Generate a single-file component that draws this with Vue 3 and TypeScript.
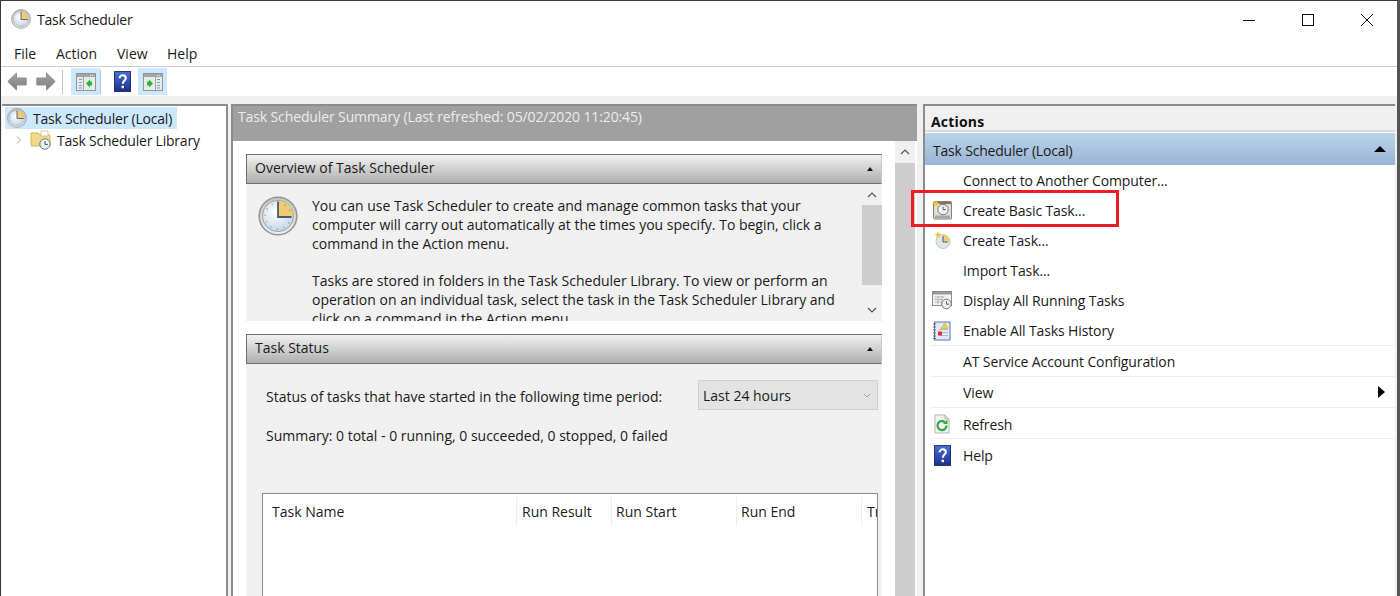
<script setup lang="ts">
interface ActionItem { label: string; icon?: string; sep?: boolean; arrow?: boolean; h: number }
const actions: ActionItem[] = [
  { label: 'Connect to Another Computer...', h: 30 },
  { label: 'Create Basic Task...', icon: 'basic', h: 30 },
  { label: 'Create Task...', icon: 'task', h: 30 },
  { label: 'Import Task...', h: 30 },
  { label: 'Display All Running Tasks', icon: 'running', h: 30 },
  { label: 'Enable All Tasks History', icon: 'history', sep: true, h: 31 },
  { label: 'AT Service Account Configuration', sep: true, h: 31 },
  { label: 'View', arrow: true, sep: true, h: 31 },
  { label: 'Refresh', icon: 'refresh', sep: true, h: 31 },
  { label: 'Help', icon: 'help', h: 33 },
]
const menus = ['File', 'Action', 'View', 'Help']
const columns = [
  { name: 'Task Name', width: 254 },
  { name: 'Run Result', width: 95 },
  { name: 'Run Start', width: 125 },
  { name: 'Run End', width: 125 },
  { name: 'Tr', width: 16 },
]
</script>

<template>
  <div class="window">
    <svg class="defs" width="0" height="0">
      <defs>
        <radialGradient id="face" cx="42%" cy="38%" r="70%">
          <stop offset="0" stop-color="#ffffff" />
          <stop offset="1" stop-color="#bfd2e2" />
        </radialGradient>
        <linearGradient id="rim" x1="0" y1="0" x2="0" y2="1">
          <stop offset="0" stop-color="#c4c4c4" />
          <stop offset="1" stop-color="#f0f0f0" />
        </linearGradient>
        <linearGradient id="helpbg" x1="0" y1="0" x2="0" y2="1">
          <stop offset="0" stop-color="#4a72d8" />
          <stop offset="1" stop-color="#1c2f86" />
        </linearGradient>
        <linearGradient id="arrowbg" x1="0" y1="0" x2="0" y2="1">
          <stop offset="0" stop-color="#a8a8a8" />
          <stop offset="1" stop-color="#7a7a7a" />
        </linearGradient>
        <symbol id="clock" viewBox="0 0 40 40">
          <circle cx="20" cy="20" r="18.8" fill="url(#rim)" stroke="#969696" stroke-width="1.6" />
          <circle cx="20" cy="20" r="15.6" fill="url(#face)" stroke="#9ea4a8" stroke-width="1" />
          <path d="M20 20V4.8A15.2 15.2 0 0 1 35.2 20Z" fill="#eecb74" />
          <circle cx="20" cy="20" r="13" fill="none" stroke="#8d9aa6" stroke-width="1.6" stroke-dasharray="1 5.8" />
          <path d="M20 5.5V21H33.5" fill="none" stroke="#4c5a68" stroke-width="1.8" />
        </symbol>
        <symbol id="help" viewBox="0 0 18 22">
          <rect x=".5" y=".5" width="17" height="21" fill="url(#helpbg)" stroke="#1b2a70" />
          <path d="M6 7.5c0-4.2 6.5-4 6.5 0 0 2.6-3.2 2.6-3.2 6" fill="none" stroke="#fff" stroke-width="2.2" />
          <rect x="8" y="15.5" width="2.6" height="2.6" fill="#fff" />
        </symbol>
        <symbol id="winleft" viewBox="0 0 20 18">
          <rect x=".5" y=".5" width="19" height="17" fill="#e4ebe8" stroke="#949494" />
          <rect x="1" y="1" width="18" height="3" fill="#a4a4a4" />
          <path d="M14 2h1v1h-1zM16 2h1v1h-1z" fill="#eeeeee" />
          <path d="M3 6.5h3M3 9.5h3M3 12.5h3M3 15h3" stroke="#8497c8" stroke-width="1.2" />
          <path d="M7.5 4v13" stroke="#a4a4a4" />
          <path d="M10 10.5l4-4v8z" fill="#2bb33c" />
          <path d="M14 8.5h2v4h-2z" fill="#2bb33c" />
        </symbol>
        <symbol id="winright" viewBox="0 0 20 18">
          <rect x=".5" y=".5" width="19" height="17" fill="#e4ebe8" stroke="#949494" />
          <rect x="1" y="1" width="18" height="3" fill="#a4a4a4" />
          <path d="M14 2h1v1h-1zM16 2h1v1h-1z" fill="#eeeeee" />
          <path d="M14 6.5h3M14 9.5h3M14 12.5h3M14 15h3" stroke="#8497c8" stroke-width="1.2" />
          <path d="M12.5 4v13" stroke="#a4a4a4" />
          <path d="M6 6.5l4 4-4 4z" fill="#2bb33c" />
          <path d="M4 8.5h2v4H4z" fill="#2bb33c" />
        </symbol>
      </defs>
    </svg>

    <header class="titlebar">
      <svg class="title-icon" viewBox="0 0 40 40"><use href="#clock" /></svg>
      <span class="title-text">Task Scheduler</span>
      <div class="caption">
        <svg class="cap" viewBox="0 0 12 12"><path d="M0 6.5h12" stroke="#111" fill="none" /></svg>
        <svg class="cap" viewBox="0 0 12 12"><rect x=".5" y=".5" width="11" height="11" fill="none" stroke="#111" /></svg>
        <svg class="cap" viewBox="0 0 12 12"><path d="M0 0l12 12M12 0L0 12" stroke="#111" fill="none" /></svg>
      </div>
    </header>

    <nav class="menubar">
      <span v-for="m in menus" :key="m" class="menu">{{ m }}</span>
    </nav>

    <div class="toolbar">
      <svg class="nav-arrow" viewBox="0 0 20 19"><path d="M.8 9.5L9.5 1v5h9.7v7H9.5v5z" fill="url(#arrowbg)" stroke="#909090" /></svg>
      <svg class="nav-arrow second" viewBox="0 0 20 19"><path d="M19.2 9.5L10.5 1v5H.8v7h9.7v5z" fill="url(#arrowbg)" stroke="#909090" /></svg>
      <i class="tb-sep first-sep"></i>
      <span class="tb-btn"><svg class="tb-win" viewBox="0 0 20 18"><use href="#winleft" /></svg></span>
      <i class="tb-sep"></i>
      <svg class="tb-help" viewBox="0 0 18 22"><use href="#help" /></svg>
      <span class="tb-btn last"><svg class="tb-win" viewBox="0 0 20 18"><use href="#winright" /></svg></span>
    </div>

    <main class="panes">
      <aside class="tree">
        <div class="tree-row selected">
          <svg class="tree-clock" viewBox="0 0 40 40"><use href="#clock" /></svg>
          <span>Task Scheduler (Local)</span>
        </div>
        <div class="tree-row child">
          <svg class="chev" viewBox="0 0 6 8"><path d="M1 .5L4.5 4 1 7.5" fill="none" stroke="#a6a6a6" /></svg>
          <svg class="folder" viewBox="0 0 22 20">
            <path d="M1 3h7l2 2h10v11H1z" fill="#f3d987" stroke="#d8b55f" />
            <rect x="11" y="1" width="7" height="5" fill="#fff" stroke="#c8b078" stroke-width=".7" />
            <circle cx="15" cy="14" r="5.2" fill="#e8eef2" stroke="#6f7b80" />
            <path d="M15 11v3.4h3" fill="none" stroke="#40606a" />
          </svg>
          <span>Task Scheduler Library</span>
        </div>
      </aside>

      <section class="center">
        <div class="summary-head">Task Scheduler Summary (Last refreshed: 05/02/2020 11:20:45)</div>
        <div class="center-body">
          <div class="sections">
            <div class="group-head">
              <span>Overview of Task Scheduler</span>
              <i class="mini-up"></i>
            </div>
            <div class="overview">
              <svg class="big-clock" viewBox="0 0 40 40"><use href="#clock" /></svg>
              <div class="overview-text">
                <p>You can use Task Scheduler to create and manage common tasks that your computer will carry out automatically at the times you specify. To begin, click a command in the Action menu.</p>
                <p>Tasks are stored in folders in the Task Scheduler Library. To view or perform an operation on an individual task, select the task in the Task Scheduler Library and click on a command in the Action menu.</p>
              </div>
              <div class="inner-scroll">
                <svg class="sb-chev" viewBox="0 0 10 6"><path d="M1 5l4-4 4 4" fill="none" stroke="#555" stroke-width="1.2" /></svg>
                <div class="inner-track"><div class="inner-thumb"></div></div>
                <svg class="sb-chev" viewBox="0 0 10 6"><path d="M1 1l4 4 4-4" fill="none" stroke="#555" stroke-width="1.2" /></svg>
              </div>
            </div>
            <div class="group-head status-head">
              <span>Task Status</span>
              <i class="mini-up"></i>
            </div>
            <div class="status">
              <div class="period">
                <span class="period-label">Status of tasks that have started in the following time period:</span>
                <div class="combo">
                  <span>Last 24 hours</span>
                  <svg class="combo-chev" viewBox="0 0 8 5"><path d="M1 1l3 3 3-3" fill="none" stroke="#a0a0a0" /></svg>
                </div>
              </div>
              <div class="totals">Summary: 0 total - 0 running, 0 succeeded, 0 stopped, 0 failed</div>
              <div class="table">
                <div class="table-head">
                  <span v-for="c in columns" :key="c.name" class="col" :style="{ width: c.width + 'px' }">{{ c.name }}</span>
                </div>
              </div>
            </div>
          </div>
          <div class="outer-scroll">
            <div class="outer-up">
              <svg class="sb-chev" viewBox="0 0 10 6"><path d="M1 5l4-4 4 4" fill="none" stroke="#555" stroke-width="1.2" /></svg>
            </div>
            <div class="outer-thumb"></div>
          </div>
        </div>
      </section>

      <aside class="actions">
        <div class="actions-title">Actions</div>
        <div class="actions-section">
          <span>Task Scheduler (Local)</span>
          <i class="section-up"></i>
        </div>
        <ul class="action-list">
          <li v-for="a in actions" :key="a.label" class="action" :class="{ sep: a.sep }" :style="{ height: a.h + 'px' }">
            <span class="action-icon">
              <svg v-if="a.icon === 'basic'" class="ai" viewBox="0 0 20 20">
                <rect x="1.5" y="1.5" width="18" height="17.5" rx="1" fill="#e2dcd2" stroke="#8a7f74" />
                <rect x="2" y="2" width="17" height="2" fill="#8a6f60" />
                <rect x="3" y="15.5" width="15" height="2.5" fill="#aaa69e" />
                <circle cx="11" cy="9.5" r="5.2" fill="#f2f6f8" stroke="#6f7c84" />
                <path d="M11 6.5v3.2h3" fill="none" stroke="#4c5a68" />
                <path d="M4 0l1 2.4L7.5 3 5.4 4.5 6 7 4 5.6 2 7l.6-2.5L.5 3 3 2.4z" fill="#f7c531" />
              </svg>
              <svg v-else-if="a.icon === 'task'" class="ai" viewBox="0 0 20 20">
                <circle cx="11" cy="11.5" r="7" fill="#dfe7ee" stroke="#c0c8d0" />
                <path d="M11 11.5V4.5a7 7 0 0 1 7 7z" fill="#eecb74" />
                <path d="M11 6v6h5" fill="none" stroke="#4c5a68" />
                <path d="M6 1l1 2.4L9.5 4 7.4 5.5 8 8 6 6.6 4 8l.6-2.5L2.5 4 5 3.4z" fill="#f7c531" />
              </svg>
              <svg v-else-if="a.icon === 'running'" class="ai" viewBox="0 0 20 20">
                <rect x=".5" y="1.5" width="19" height="14" fill="#f2f2f2" stroke="#8a8a8a" />
                <rect x="1" y="2" width="18" height="2.5" fill="#9a9a9a" />
                <path d="M2.5 7h10M2.5 9.5h8M2.5 12h7M6 6v8M10 6v8" stroke="#b4b4b4" />
                <circle cx="14.5" cy="14" r="4.8" fill="#e8eef2" stroke="#6f7b80" />
                <path d="M14.5 11.2v3h2.6" fill="none" stroke="#40606a" />
              </svg>
              <svg v-else-if="a.icon === 'history'" class="ai" viewBox="0 0 20 20">
                <rect x="2.5" y="1" width="15.5" height="18" fill="#dfe9f8" stroke="#5f74a8" />
                <path d="M1 3h3M1 6h3M1 9h3M1 12h3M1 15h3M1 17.5h3" stroke="#6a6a6a" />
                <path d="M7 8.5h9M7 11.5h9M7 14.5h9" stroke="#a9b8d4" />
                <path d="M12.5 2L16 7.5H9z" fill="#f5d33b" stroke="#c79f1f" stroke-width=".5" />
                <rect x="6" y="10.5" width="4" height="4" fill="#d8343a" />
              </svg>
              <svg v-else-if="a.icon === 'refresh'" class="ai" viewBox="0 0 20 20">
                <path d="M3 1h10l4 4v14H3z" fill="#f4f4f4" stroke="#b4b4b4" />
                <path d="M13 1v4h4" fill="#e0e0e0" stroke="#b4b4b4" />
                <path d="M14.5 11.5a4.5 4.5 0 1 1-1.6-3.4" fill="none" stroke="#2fa83d" stroke-width="2.2" />
                <path d="M15.5 5.5v4.5h-4.5z" fill="#2fa83d" />
              </svg>
              <svg v-else-if="a.icon === 'help'" class="ai help" viewBox="0 0 18 22"><use href="#help" /></svg>
            </span>
            <span>{{ a.label }}</span>
            <i v-if="a.arrow" class="sub-arrow"></i>
          </li>
        </ul>
        <div class="highlight"></div>
      </aside>
    </main>
  </div>
</template>

<style>
html, body { margin: 0; background: #fff; }
</style>

<style scoped>
.window {
  position: relative;
  box-sizing: border-box;
  width: 1400px;
  height: 596px;
  overflow: hidden;
  background: #fff;
  border-top: 1px solid #3a3a3a;
  border-left: 1px solid #3a3a3a;
  border-right: 3px solid #555;
  font-family: "Open Sans", "Noto Sans", sans-serif;
  font-size: 14px;
  color: #1a1a1a;
}
.defs { position: absolute; }
.titlebar { display: flex; align-items: center; height: 38px; box-sizing: border-box; padding: 0 0 2px 10px; }
.title-icon { width: 20px; height: 20px; }
.title-text { margin-left: 6px; letter-spacing: -0.2px; }
.caption { display: flex; margin-left: auto; gap: 47px; padding: 2px 24px 0 0; }
.cap { width: 12px; height: 12px; display: block; }
.menubar { display: flex; align-items: center; height: 28px; padding: 2px 0 0 13px; border-bottom: 1px solid #c8ccd0; box-sizing: border-box; }
.menu:nth-child(1) { width: 42px; }
.menu:nth-child(2) { width: 61px; }
.menu:nth-child(3) { width: 50px; }
.toolbar { display: flex; align-items: center; height: 29px; padding-left: 6px; background: #fff; }
.nav-arrow { width: 20px; height: 19px; }
.nav-arrow.second { margin-left: 9px; }
.tb-sep { width: 1px; height: 24px; background: #c4c4c4; }
.first-sep { margin-left: 6px; margin-right: 8px; }
.tb-btn { display: flex; align-items: center; justify-content: center; width: 29px; height: 27px; background: #cce8ff; }
.tb-btn.last { margin-left: 7px; }
.tb-win { width: 20px; height: 18px; }
.tb-help { width: 17px; height: 21px; margin-left: 13px; }
.panes {
  display: grid;
  grid-template-columns: 226px 686px 475px;
  column-gap: 3px;
  align-items: stretch;
  height: 500px;
  box-sizing: border-box;
  padding: 8px 0 0 1px;
  background: #f0f0f0;
}
.tree {
  background: #fff;
  border-top: 2px solid #8c8c8c;
  border-right: 2px solid #8c8c8c;
  padding: 1px 0 0 3px;
  box-sizing: border-box;
  width: 226px;
}
.tree-row { display: flex; align-items: center; height: 22px; white-space: nowrap; letter-spacing: -0.22px; }
.tree-row.selected { width: 172px; background: #cce8ff; padding-left: 2px; box-sizing: border-box; }
.tree-row.child { padding-left: 11px; }
.tree-clock { width: 20px; height: 20px; margin-right: 6px; }
.chev { width: 6px; height: 8px; margin-right: 8px; }
.folder { width: 22px; height: 20px; margin-right: 5px; }
.center {
  display: flex;
  flex-direction: column;
  border-top: 2px solid #8c8c8c;
  border-left: 2px solid #8c8c8c;
  background: #fff;
  min-height: 0;
}
.summary-head { height: 35px; background: #a0a0a0; color: #ececec; padding: 1px 0 0 5px; box-sizing: border-box; white-space: nowrap; letter-spacing: -0.12px; }
.center-body { display: flex; flex: 1; min-height: 0; }
.sections { width: 662px; padding: 13px 0 0 13px; box-sizing: border-box; flex: none; }
.group-head {
  display: flex;
  align-items: center;
  justify-content: space-between;
  width: 636px;
  height: 30px;
  box-sizing: border-box;
  padding: 0 8px 4px;
  background: linear-gradient(#f2f2f2, #aeaeae);
  border: 1px solid #6f6f6f;
  border-width: 1px 0 1px 1px;
  border-right: 1px solid #c8c8c8;
}
.mini-up { width: 0; height: 0; margin-top: 4px; border: 3px solid transparent; border-top: 0; border-bottom: 4px solid #111; }
.overview { display: flex; width: 636px; height: 137px; background: #f0f0f0; overflow: hidden; }
.big-clock { width: 40px; height: 40px; margin: 12px 0 0 12px; flex: none; }
.overview-text { width: 537px; padding: 13px 0 0 14px; line-height: 18.75px; flex: none; overflow: hidden; }
.overview-text p { margin: 0 0 18.75px; }
.inner-scroll { display: flex; flex-direction: column; align-items: center; width: 20px; margin-left: auto; padding-top: 8px; height: 137px; box-sizing: border-box; }
.inner-track { flex: none; width: 100%; height: 109px; padding-top: 7px; box-sizing: border-box; }
.inner-thumb { height: 80px; background: #cdcdcd; }
.sb-chev { width: 10px; height: 6px; flex: none; }
.status-head { margin-top: 13px; }
.status { width: 636px; height: 240px; background: #f0f0f0; padding: 16px 4px 0 16px; box-sizing: border-box; }
.period { display: flex; align-items: center; justify-content: space-between; height: 30px; padding-left: 4px; }
.period-label { margin-top: 2px; }
.combo { display: flex; align-items: center; justify-content: space-between; width: 180px; height: 30px; box-sizing: border-box; padding: 0 6px 0 4px; background: #e3e3e3; border: 1px solid #d0d0d0; }
.combo-chev { width: 8px; height: 5px; }
.totals { margin-top: 16px; padding-left: 4px; }
.table { margin-top: 48px; height: 150px; background: #fff; border: 1px solid #8c8c8c; border-bottom: 0; box-sizing: border-box; overflow: hidden; }
.table-head { display: flex; height: 32px; padding-top: 3px; box-sizing: border-box; }
.col { display: flex; align-items: center; box-sizing: border-box; padding-left: 5px; border-right: 1px solid #eee; white-space: nowrap; overflow: hidden; flex: none; }
.col:first-child { padding-left: 9px; }
.col:nth-child(3), .col:nth-child(4) { padding-left: 4px; }
.col:last-child { border-right: 0; }
.outer-scroll { display: flex; flex-direction: column; width: 20px; }
.outer-up { display: flex; align-items: center; justify-content: center; height: 22px; background: #f0f0f0; }
.outer-thumb { flex: 1; background: #cdcdcd; }
.actions {
  position: relative;
  border-top: 2px solid #8c8c8c;
  border-left: 2px solid #8c8c8c;
  background: #fff;
  margin-left: 3px;
  width: 472px;
  box-sizing: border-box;
}
.actions-title { height: 26px; padding: 6px 0 0 6px; background: #f0f0f0; font-weight: 700; color: #111; border-bottom: 2px solid #d8d8d8; box-sizing: border-box; letter-spacing: 0.2px; line-height: 19px; }
.actions-section { display: flex; align-items: center; justify-content: space-between; height: 32px; margin-top: 1px; padding: 3px 9px 0 8px; box-sizing: border-box; background: linear-gradient(#bcd3ec, #99b5d3); letter-spacing: -0.2px; }
.section-up { width: 0; height: 0; margin-top: -3px; border: 6px solid transparent; border-top: 0; border-bottom: 6px solid #000; }
.action-list { list-style: none; margin: 0; padding: 0; }
.action { display: flex; align-items: center; position: relative; box-sizing: border-box; padding-left: 5px; white-space: nowrap; letter-spacing: -0.12px; }
.action:nth-child(9) { padding-top: 1px; }
.action.sep::after { content: ""; position: absolute; left: 5px; right: 0; bottom: 0; height: 1px; background: #eeeeee; }
.action-icon { display: flex; align-items: center; justify-content: center; width: 24px; height: 24px; margin-right: 9px; flex: none; }
.ai { width: 20px; height: 20px; }
.ai.help { width: 17px; height: 21px; }
.sub-arrow { position: absolute; right: 10px; top: 9px; width: 0; height: 0; border: 6px solid transparent; border-right: 0; border-left: 7px solid #000; }
.highlight { position: absolute; left: -14px; top: 84px; width: 208px; height: 37px; box-sizing: border-box; border: 3px solid #ed1c24; pointer-events: none; }
</style>
